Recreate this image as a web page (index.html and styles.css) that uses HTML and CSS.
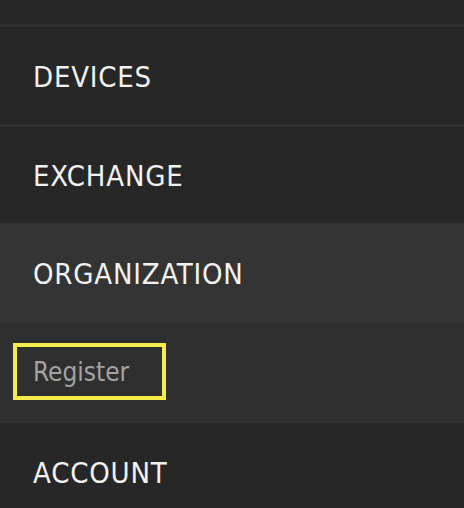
FILE: index.html
```html
<!DOCTYPE html>
<html>
<head>
<meta charset="utf-8">
<link rel="stylesheet" href="styles.css">
</head>
<body>
<nav class="menu">
  <div class="filler"></div>
  <div class="item"><span class="label">DEVICES</span></div>
  <div class="item item-short"><span class="label">EXCHANGE</span></div>
  <div class="item item-active"><span class="label">ORGANIZATION</span></div>
  <div class="submenu">
    <a class="subitem">Register</a>
  </div>
  <div class="item"><span class="label">ACCOUNT</span></div>
</nav>
</body>
</html>
```
FILE: styles.css
```css
html, body {
  margin: 0;
  padding: 0;
  background: #272727;
}
body {
  width: 464px;
  height: 508px;
  overflow: hidden;
  font-family: "DejaVu Sans Condensed", "DejaVu Sans", sans-serif;
  font-stretch: condensed;
}
.menu {
  display: flex;
  flex-direction: column;
}
.filler {
  height: 24px;
  background: #272727;
}
.item {
  box-sizing: border-box;
  display: flex;
  align-items: center;
  height: 100px;
  border-top: 3px solid #313131;
  background: #272727;
  padding: 3px 0 0 33px;
}
.item-short {
  height: 99px;
}
.item-active {
  height: 100px;
  border-top: none;
  padding-top: 2px;
  background: #343434;
}
.label {
  color: #f2f2f2;
  font-size: 29px;
  letter-spacing: 0.8px;
  line-height: 1;
}
.submenu {
  display: flex;
  align-items: center;
  height: 97px;
  background: #2f2f2f;
  padding-left: 13px;
}
.subitem {
  box-sizing: border-box;
  display: flex;
  align-items: center;
  width: 153px;
  height: 57px;
  border: 4px solid #f4ec4a;
  padding-left: 16px;
  color: #a3a3a3;
  font-size: 26px;
  line-height: 1;
}
```
